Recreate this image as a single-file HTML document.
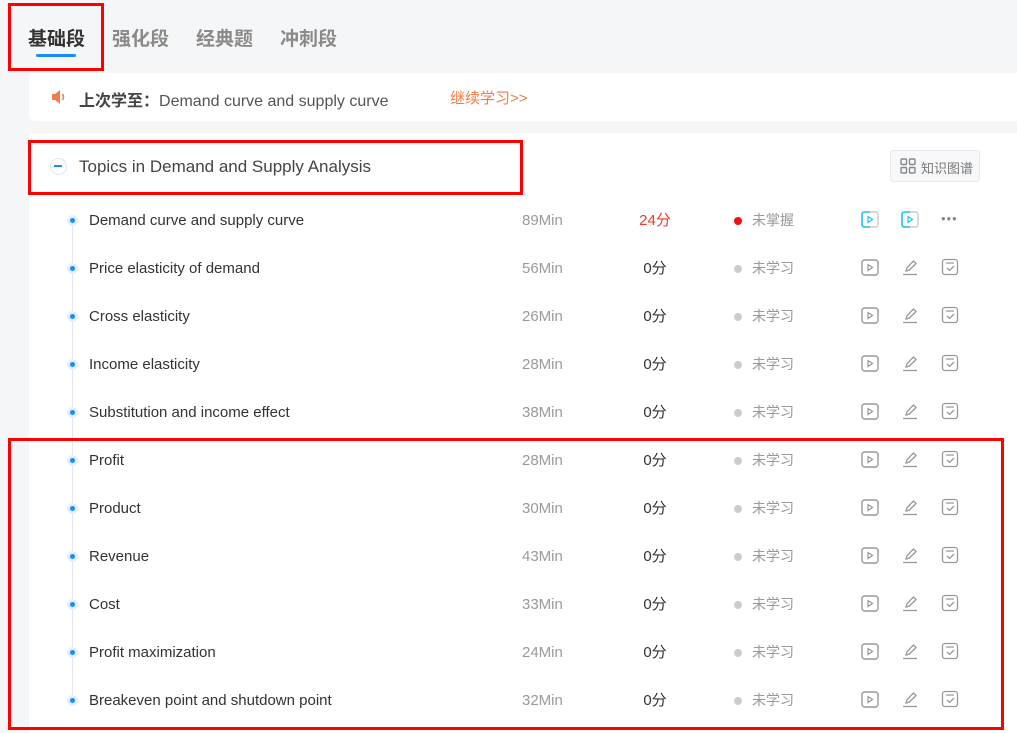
<!DOCTYPE html>
<html><head><meta charset="utf-8"><style>
*{margin:0;padding:0;box-sizing:border-box}
body{width:1017px;height:733px;overflow:hidden;background:#f5f6f8;font-family:"Liberation Sans","Noto Sans CJK SC",sans-serif;position:relative}
.a{position:absolute;white-space:nowrap}
.tab{top:24px;font-size:19px;font-weight:bold;color:#8a8a8a}
.card{position:absolute;background:#fff}
.row{position:absolute;left:0;width:1017px;height:48px}
.row .t{left:89px;top:16px;font-size:15px;color:#333}
.row .m{left:522px;top:16px;font-size:15px;color:#9a9a9a}
.row .s{left:620px;width:70px;text-align:center;top:13px;font-size:15px;color:#333}
.row .d{left:734px;top:21px;width:8px;height:8px;border-radius:50%;background:#ccc}
.row .st{left:752px;top:14px;font-size:14px;color:#999}
.dot{position:absolute;left:67px;top:19px;width:11px;height:11px;border-radius:50%;background:#e3f0ff}
.dot::after{content:"";position:absolute;left:3px;top:3px;width:5px;height:5px;border-radius:50%;background:#1a8cff}
.ic{position:absolute;top:15px}
.red{position:absolute;border:3px solid #f00}
</style></head><body>
<div class="a tab" style="left:28px;color:#333">基础段</div>
<div class="a" style="left:36px;top:54px;width:40px;height:3px;background:#1a8cff;border-radius:2px"></div>
<div class="a tab" style="left:112px">强化段</div>
<div class="a tab" style="left:196px">经典题</div>
<div class="a tab" style="left:280px">冲刺段</div>

<div class="card" style="left:29px;top:73px;width:988px;height:48px;border-radius:6px 0 0 6px"></div>
<svg class="a" style="left:50px;top:88px" width="18" height="18" viewBox="0 0 18 18"><path d="M2 6h3l5-4v14l-5-4H2z" fill="#f27c4a"/><path d="M12.5 6q2 3 0 6" stroke="#f27c4a" stroke-width="1.6" fill="none"/></svg>
<div class="a" style="left:79px;top:87px;font-size:16px;color:#555"><b style="color:#444">上次学至：</b>Demand curve and supply curve</div>
<div class="a" style="left:450px;top:87px;font-size:15px;color:#f27c4a">继续学习&gt;&gt;</div>

<div class="card" style="left:29px;top:133px;width:988px;height:600px"></div>
<div class="a" style="left:50px;top:158px;width:17px;height:17px;border-radius:50%;border:1.5px solid #d7eaff"><div style="position:absolute;left:3px;top:6px;width:8px;height:2px;background:#1a8cff"></div></div>
<div class="a" style="left:79px;top:157px;font-size:17px;color:#444">Topics in Demand and Supply Analysis</div>
<div class="a" style="left:890px;top:150px;width:90px;height:32px;border:1px solid #e6e8eb;border-radius:3px;background:#f7f8fa"></div>
<svg class="a" style="left:900px;top:158px" width="16" height="16" viewBox="0 0 16 16" fill="none" stroke="#888" stroke-width="1.4"><rect x="1" y="1" width="5.5" height="5.5" rx="1"/><rect x="9.5" y="1" width="5.5" height="5.5" rx="1"/><rect x="1" y="9.5" width="5.5" height="5.5" rx="1"/><rect x="9.5" y="9.5" width="5.5" height="5.5" rx="1"/></svg>
<div class="a" style="left:921px;top:158px;font-size:13px;color:#777">知识图谱</div>
<div class="a" style="left:72px;top:225px;width:1px;height:480px;background:#e4e8ee"></div>

<div id="rows"></div>
<script>
var d=[["Demand curve and supply curve","89Min","24分",1],["Price elasticity of demand","56Min","0分"],["Cross elasticity","26Min","0分"],["Income elasticity","28Min","0分"],["Substitution and income effect","38Min","0分"],["Profit","28Min","0分"],["Product","30Min","0分"],["Revenue","43Min","0分"],["Cost","33Min","0分"],["Profit maximization","24Min","0分"],["Breakeven point and shutdown point","32Min","0分"]];
var play='<svg width="18" height="17" viewBox="0 0 18 17"><rect x="1" y="1" width="16" height="15" rx="2.5" fill="none" stroke="#999" stroke-width="1.4"/><path d="M7 5.5v6l4.5-3z" fill="none" stroke="#999" stroke-width="1.2"/></svg>';
var playB='<svg width="18" height="17" viewBox="0 0 18 17"><rect x="1" y="1" width="16" height="15" rx="2.5" fill="none" stroke="#ccc" stroke-width="1.4"/><path d="M9 1H3.5Q1 1 1 3.5v10Q1 16 3.5 16H9" fill="none" stroke="#27c3f3" stroke-width="1.6"/><path d="M7 5.5v6l4.5-3z" fill="none" stroke="#27c3f3" stroke-width="1.2"/></svg>';
var pen='<svg width="18" height="18" viewBox="0 0 18 18" fill="none" stroke="#999" stroke-width="1.3"><path d="M5 13l1-3.5L12.5 3l2.5 2.5L8.5 12z"/><path d="M2 16.5h14"/></svg>';
var chk='<svg width="18" height="18" viewBox="0 0 18 18" fill="none" stroke="#999" stroke-width="1.3"><rect x="1.5" y="1.5" width="15" height="15" rx="2.5"/><path d="M5 5h8M6 10l2.5 2.5L13 8"/></svg>';
var h='';
d.forEach(function(r,i){var y=196+i*48;
h+='<div class="row" style="top:'+y+'px"><div class="dot"></div><div class="a t">'+r[0]+'</div><div class="a m">'+r[1]+'</div><div class="a s" style="'+(r[3]?'color:#f5362a':'')+'">'+r[2]+'</div><div class="a d" style="'+(r[3]?'background:#f21010':'')+'"></div><div class="a st">'+(r[3]?'未掌握':'未学习')+'</div>';
if(r[3])h+='<div class="ic" style="left:861px">'+playB+'</div><div class="ic" style="left:901px">'+playB+'</div><div class="a" style="left:941px;top:15px;font-size:13px;color:#888;letter-spacing:1px">•••</div>';
else h+='<div class="ic" style="left:861px">'+play+'</div><div class="ic" style="left:901px;top:14px">'+pen+'</div><div class="ic" style="left:941px;top:14px">'+chk+'</div>';
h+='</div>';});
document.getElementById('rows').innerHTML=h;
</script>

<div class="red" style="left:8px;top:3px;width:96px;height:68px"></div>
<div class="red" style="left:28px;top:140px;width:495px;height:55px"></div>
<div class="red" style="left:8px;top:438px;width:996px;height:292px"></div>
</body></html>
